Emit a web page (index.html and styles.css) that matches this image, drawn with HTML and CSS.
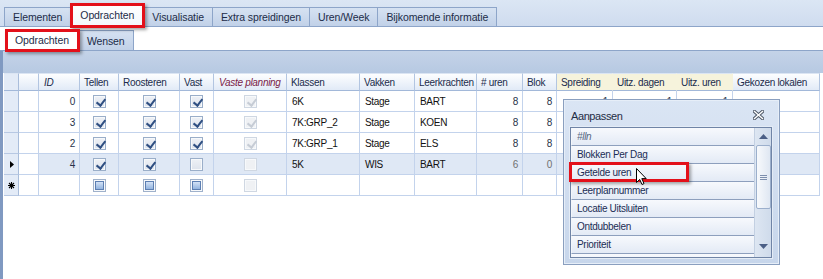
FILE: index.html
```html
<!DOCTYPE html>
<html>
<head>
  <title>Opdrachten</title>
  <meta charset="utf-8">
  <link rel="stylesheet" href="styles.css">
</head>
<body>
  <div class="window">
    <div class="tabstrip main">
      <div class="tab">Elementen</div>
      <div class="tab active marked">Opdrachten</div>
      <div class="tab">Visualisatie</div>
      <div class="tab">Extra spreidingen</div>
      <div class="tab">Uren/Week</div>
      <div class="tab">Bijkomende informatie</div>
    </div>
    <div class="tabstrip sub">
      <div class="tab active marked">Opdrachten</div>
      <div class="tab">Wensen</div>
    </div>

    <div class="grid">
      <div class="group-panel"></div>
      <table>
        <colgroup>
          <col class="w-sel"><col class="w-blank"><col class="w-id"><col class="w-tellen">
          <col class="w-roost"><col class="w-vast"><col class="w-vp"><col class="w-klas">
          <col class="w-vak"><col class="w-lk"><col class="w-uren"><col class="w-blok">
          <col class="w-spr"><col class="w-ud"><col class="w-uu"><col class="w-lok">
        </colgroup>
        <thead>
          <tr>
            <th class="sel"></th>
            <th></th>
            <th class="em">ID</th>
            <th>Tellen</th>
            <th>Roosteren</th>
            <th>Vast</th>
            <th class="em red">Vaste planning</th>
            <th>Klassen</th>
            <th>Vakken</th>
            <th>Leerkrachten</th>
            <th># uren</th>
            <th>Blok</th>
            <th class="soft">Spreiding</th>
            <th class="soft">Uitz. dagen</th>
            <th class="soft">Uitz. uren</th>
            <th>Gekozen lokalen</th>
          </tr>
        </thead>
        <tbody>
          <tr>
            <td class="sel"></td><td class="blank"></td>
            <td class="num">0</td>
            <td class="chk"><span class="cb on"></span></td>
            <td class="chk"><span class="cb on"></span></td>
            <td class="chk"><span class="cb on"></span></td>
            <td class="chk"><span class="cb on off"></span></td>
            <td>6K</td><td>Stage</td><td>BART</td>
            <td class="num">8</td><td class="num">8</td>
            <td class="num">1</td><td class="num">1</td><td class="num">1</td><td></td>
          </tr>
          <tr>
            <td class="sel"></td><td class="blank"></td>
            <td class="num">3</td>
            <td class="chk"><span class="cb on"></span></td>
            <td class="chk"><span class="cb on"></span></td>
            <td class="chk"><span class="cb on"></span></td>
            <td class="chk"><span class="cb on off"></span></td>
            <td>7K:GRP_2</td><td>Stage</td><td>KOEN</td>
            <td class="num">8</td><td class="num">8</td>
            <td></td><td></td><td></td><td></td>
          </tr>
          <tr>
            <td class="sel"></td><td class="blank"></td>
            <td class="num">2</td>
            <td class="chk"><span class="cb on"></span></td>
            <td class="chk"><span class="cb on"></span></td>
            <td class="chk"><span class="cb on"></span></td>
            <td class="chk"><span class="cb on off"></span></td>
            <td>7K:GRP_1</td><td>Stage</td><td>ELS</td>
            <td class="num">8</td><td class="num">8</td>
            <td></td><td></td><td></td><td></td>
          </tr>
          <tr class="current">
            <td class="sel"><svg class="marker" width="4" height="7" viewBox="0 0 4 7"><path d="M0 0 L4 3.5 L0 7 Z" fill="#000"/></svg></td>
            <td class="blank"></td>
            <td class="num">4</td>
            <td class="chk"><span class="cb on"></span></td>
            <td class="chk"><span class="cb on"></span></td>
            <td class="chk"><span class="cb"></span></td>
            <td class="chk"><span class="cb off"></span></td>
            <td>5K</td><td>WIS</td><td>BART</td>
            <td class="num dim">6</td><td class="num dim">0</td>
            <td></td><td></td><td></td><td></td>
          </tr>
          <tr class="new">
            <td class="sel"><svg class="marker" width="7" height="7" viewBox="0 0 7 7"><path d="M3.5 0 V7 M0 3.5 H7 M1 1 L6 6 M6 1 L1 6" stroke="#000" stroke-width="1.1"/></svg></td>
            <td class="blank"></td>
            <td></td>
            <td class="chk"><span class="cb nul"></span></td>
            <td class="chk"><span class="cb nul"></span></td>
            <td class="chk"><span class="cb nul"></span></td>
            <td class="chk"><span class="cb off"></span></td>
            <td></td><td></td><td></td><td></td><td></td>
            <td></td><td></td><td></td><td></td>
          </tr>
        </tbody>
      </table>
    </div>

    <div class="customize">
      <div class="cz-head">
        <span class="cz-title">Aanpassen</span>
        <svg class="cz-close" width="11" height="10" viewBox="0 0 11 10">
          <path d="M1.5 1.5 L9.5 8.5 M9.5 1.5 L1.5 8.5" stroke="#4f5968" stroke-width="3.4" stroke-linecap="square"/>
          <path d="M1.5 1.5 L9.5 8.5 M9.5 1.5 L1.5 8.5" stroke="#fff" stroke-width="1.4" stroke-linecap="square"/>
        </svg>
      </div>
      <div class="cz-list">
        <div class="cz-items">
          <div class="cz-item hint">#lln</div>
          <div class="cz-item">Blokken Per Dag</div>
          <div class="cz-item">Getelde uren</div>
          <div class="cz-item">Leerplannummer</div>
          <div class="cz-item">Locatie Uitsluiten</div>
          <div class="cz-item">Ontdubbelen</div>
          <div class="cz-item">Prioriteit</div>
          <div class="cz-item"></div>
        </div>
        <div class="cz-scroll">
          <svg class="arrow" width="9" height="5" viewBox="0 0 9 5"><path d="M0 5 L4.5 0 L9 5 Z" fill="#4b5f86"/></svg>
          <div class="thumb"><span></span><span></span><span></span></div>
          <svg class="arrow down" width="9" height="5" viewBox="0 0 9 5"><path d="M0 0 L4.5 5 L9 0 Z" fill="#4b5f86"/></svg>
        </div>
      </div>
    </div>

    <div class="callout"></div>
    <svg class="cursor" width="12" height="19" viewBox="0 0 12 19">
      <path d="M0.5 0.5 L0.5 14.5 L3.7 11.4 L6 16.5 L8 15.6 L5.8 10.6 L10.2 10.6 Z" fill="#fff" stroke="#000" stroke-width="1" stroke-linejoin="miter"/>
    </svg>
  </div>
</body>
</html>
```

FILE: styles.css
```css
* {
  box-sizing: border-box;
}
body {
  margin: 0;
  background: #fff;
  font-family: "Liberation Sans", Arial, sans-serif;
  color: #111;
}
.window {
  position: relative;
  width: 823px;
  height: 279px;
  overflow: hidden;
  background: #fff;
}

/* tabs */
.tabstrip {
  display: flex;
  align-items: flex-end;
}
.tabstrip.main {
  height: 27px;
  padding-left: 4px;
  background: linear-gradient(#dbe6f4, #cfdcef);
  border-bottom: 1px solid #8da5c9;
}
.tabstrip.sub {
  height: 24px;
  padding-left: 5px;
  background: #fff;
  border-bottom: 1px solid #8da5c9;
}
.tab {
  position: relative;
  height: 19px;
  padding: 0 8px;
  display: flex;
  align-items: center;
  font-size: 10.5px;
  letter-spacing: -0.1px;
  color: #1c2c48;
  background: linear-gradient(#d6e2f2, #c1d1e8);
  border: 1px solid #8da5c9;
  border-bottom: none;
  white-space: nowrap;
}
.tab + .tab {
  margin-left: -1px;
}
.main .tab.active {
  height: 24px;
  margin-bottom: -1px;
  padding: 0 9px 2px;
  background: linear-gradient(#ffffff, #f3f7fc);
  z-index: 1;
}
.sub .tab {
  height: 20px;
}
.sub .tab.active {
  height: 22px;
  margin-bottom: -1px;
  padding: 0 9px 1px;
  background: #fff;
  z-index: 1;
}
.marked::after {
  content: "";
  position: absolute;
  left: -1px;
  top: -1px;
  right: -2px;
  bottom: -1px;
  border: 3px solid #e3101a;
  box-shadow: 2px 2px 3px rgba(0, 0, 0, 0.35);
}

/* grid */
.grid {
  border-left: 3px solid #8099c1;
  height: 229px;
}
.group-panel {
  height: 22px;
  background: linear-gradient(#c4d3e8, #b7c9e2);
}
table {
  margin-left: 1px;
  width: 816px;
  table-layout: fixed;
  border-collapse: separate;
  border-spacing: 0;
}
.w-sel { width: 15px; }
.w-blank { width: 20px; }
.w-id { width: 41px; }
.w-tellen { width: 39px; }
.w-roost { width: 61px; }
.w-vast { width: 34px; }
.w-vp { width: 73px; }
.w-klas { width: 73px; }
.w-vak { width: 55px; }
.w-lk { width: 62px; }
.w-uren { width: 46px; }
.w-blok { width: 34px; }
.w-spr { width: 56px; }
.w-ud { width: 64px; }
.w-uu { width: 56px; }
.w-lok { width: 87px; }

th, td {
  padding: 0 4px;
  font-size: 10px;
  letter-spacing: -0.3px;
  white-space: nowrap;
  overflow: hidden;
  text-align: left;
}
th {
  height: 18px;
  font-weight: normal;
  color: #1b2c4c;
  background: linear-gradient(#fdfeff, #e1eaf7);
  border-right: 1px solid #b2c5e1;
  border-bottom: 1px solid #a2b8d9;
  border-top: 1px solid #dbe5f3;
}
th.em {
  font-style: italic;
  padding-left: 5px;
}
th.red {
  color: #7a2247;
}
th.soft {
  background: #f6f3dc;
  border-right-color: #f6f3dc;
}
td {
  height: 21px;
  color: #111;
  border-right: 1px solid #c3d3ec;
  border-bottom: 1px solid #c3d3ec;
  padding-left: 5px;
}
td.num {
  text-align: right;
  padding-right: 4px;
  color: #27324a;
}
td.dim {
  color: #707070;
}
td.chk {
  text-align: center;
  padding: 0;
}
.sel {
  background: #e3ebf7;
  border-right-color: #a9bddb;
  padding: 0;
}
td.sel {
  border-bottom-color: #b7c8e3;
}
tr.current td:not(.sel):not(.blank) {
  background: #dfe8f5;
}
.marker {
  display: block;
  margin-left: 6px;
}
tr.new .marker {
  margin-left: 4px;
}

/* checkboxes */
.cb {
  position: relative;
  display: inline-block;
  vertical-align: middle;
  width: 13px;
  height: 13px;
  border: 1px solid #9aaec9;
  background: linear-gradient(#eef1f6, #dde3ec);
  box-shadow: inset 0 0 0 1px #f7f9fb;
}
.cb.on::after {
  content: "";
  position: absolute;
  left: 4px;
  top: 1px;
  width: 4px;
  height: 7px;
  border: solid #2f4f82;
  border-width: 0 2px 2px 0;
  transform: rotate(38deg);
}
.cb.off {
  border-color: #cfd7e2;
  background: #eff1f4;
}
.cb.off::after {
  border-color: #c6ccd5;
}
.cb.nul {
  border-color: #9fb1cb;
  background: #eef2f7;
}
.cb.nul::after {
  content: "";
  position: absolute;
  left: 1px;
  top: 1px;
  right: 1px;
  bottom: 1px;
  border: 1px solid #5d7fb2;
  background: linear-gradient(#d3e2f6, #93b4df);
}

/* customize popup */
.customize {
  position: absolute;
  left: 563px;
  top: 99px;
  width: 217px;
  height: 166px;
  border: 1px solid #8a9fbf;
  background: linear-gradient(#dae5f4, #c7d6eb);
  box-shadow: inset 0 0 0 1px #e6eef8;
  padding: 0 7px 6px 6px;
  display: flex;
  flex-direction: column;
}
.cz-head {
  height: 27px;
  padding: 5px 8px 0 1px;
  display: flex;
  align-items: center;
  justify-content: space-between;
}
.cz-title {
  font-size: 11px;
  letter-spacing: -0.4px;
  color: #1f2d45;
}
.cz-close {
  margin-top: -2px;
}
.cz-list {
  flex: 1;
  display: flex;
  border: 1px solid #6f84a6;
  box-shadow: 0 0 0 1px #e4ecf6;
  overflow: hidden;
}
.cz-items {
  flex: 1;
  overflow: hidden;
}
.cz-item {
  height: 18px;
  padding-left: 5px;
  display: flex;
  align-items: center;
  font-size: 10px;
  letter-spacing: -0.3px;
  color: #1a2d55;
  background: linear-gradient(#f7f9fd, #e3eaf5);
  border-bottom: 1px solid #8d9fbd;
  border-left: 1px solid #f4f7fb;
}
.cz-item.hint {
  font-style: italic;
  color: #56667f;
}
.cz-scroll {
  width: 17px;
  display: flex;
  flex-direction: column;
  align-items: center;
  background: linear-gradient(90deg, #dde6f2, #cfdbeb);
  border-left: 1px solid #c3d0e2;
}
.cz-scroll .arrow {
  display: block;
  margin-top: 6px;
  margin-bottom: 6px;
}
.cz-scroll .arrow.down {
  margin-top: auto;
  margin-bottom: 8px;
}
.thumb {
  width: 15px;
  height: 64px;
  border: 1px solid #9bafcc;
  border-radius: 2px;
  background: linear-gradient(90deg, #f7f9fc, #dfe7f2);
  display: flex;
  flex-direction: column;
  align-items: center;
  justify-content: center;
  gap: 1px;
}
.thumb span {
  display: block;
  width: 7px;
  height: 1px;
  background: #7d8fad;
}

/* annotations */
.callout {
  position: absolute;
  left: 569px;
  top: 162px;
  width: 120px;
  height: 20px;
  border: 3px solid #e3101a;
  box-shadow: 2px 2px 3px rgba(0, 0, 0, 0.35);
}
.cursor {
  position: absolute;
  left: 636px;
  top: 168px;
}
```
